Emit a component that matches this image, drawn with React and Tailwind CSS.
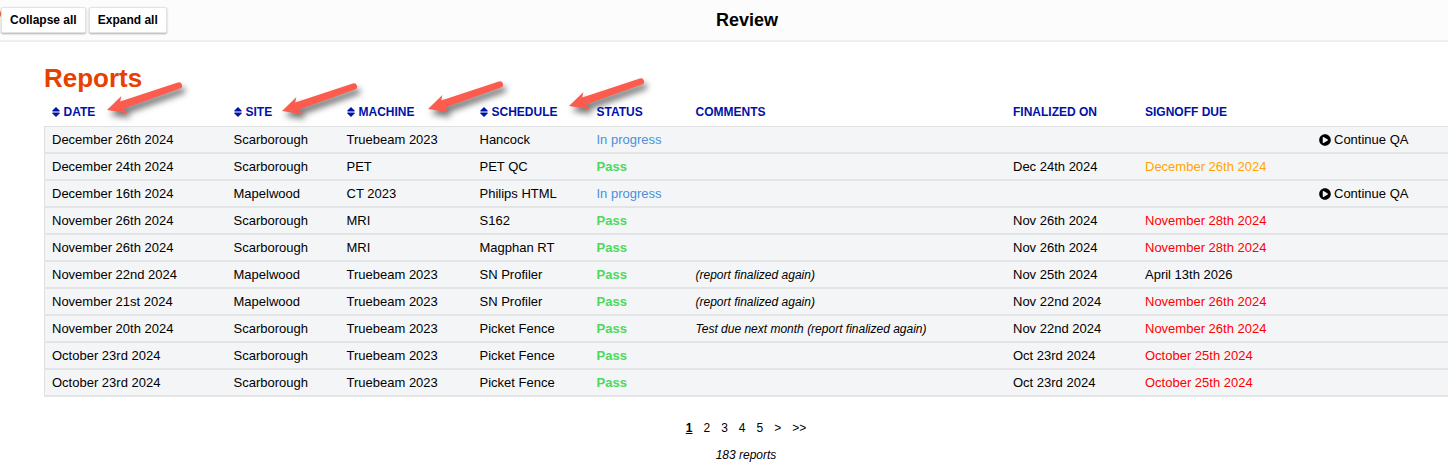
import React from 'react';
import { FaPlayCircle } from 'react-icons/fa';

const columns = [
  { label: 'Date', sortable: true, width: 'w-[182px]', arrow: 'left-[50px] -top-[25px]' },
  { label: 'Site', sortable: true, width: 'w-[113px]', arrow: 'left-[43px] -top-[24px]' },
  { label: 'Machine', sortable: true, width: 'w-[133px]', arrow: 'left-[76px] -top-[26px]' },
  { label: 'Schedule', sortable: true, width: 'w-[117px]', arrow: 'left-[84px] -top-[29px]' },
  { label: 'Status', width: 'w-[99px]' },
  { label: 'Comments', width: '' },
  { label: 'Finalized on', width: 'w-[132px]' },
  { label: 'Signoff due', width: 'w-[174px]' },
];

const reports = [
  { id: 1, date: 'December 26th 2024', site: 'Scarborough', machine: 'Truebeam 2023', schedule: 'Hancock', status: 'In progress' },
  { id: 2, date: 'December 24th 2024', site: 'Scarborough', machine: 'PET', schedule: 'PET QC', status: 'Pass', finalized: 'Dec 24th 2024', due: 'December 26th 2024', dueState: 'soon' },
  { id: 3, date: 'December 16th 2024', site: 'Mapelwood', machine: 'CT 2023', schedule: 'Philips HTML', status: 'In progress' },
  { id: 4, date: 'November 26th 2024', site: 'Scarborough', machine: 'MRI', schedule: 'S162', status: 'Pass', finalized: 'Nov 26th 2024', due: 'November 28th 2024', dueState: 'late' },
  { id: 5, date: 'November 26th 2024', site: 'Scarborough', machine: 'MRI', schedule: 'Magphan RT', status: 'Pass', finalized: 'Nov 26th 2024', due: 'November 28th 2024', dueState: 'late' },
  { id: 6, date: 'November 22nd 2024', site: 'Mapelwood', machine: 'Truebeam 2023', schedule: 'SN Profiler', status: 'Pass', comments: '(report finalized again)', finalized: 'Nov 25th 2024', due: 'April 13th 2026', dueState: 'ok' },
  { id: 7, date: 'November 21st 2024', site: 'Mapelwood', machine: 'Truebeam 2023', schedule: 'SN Profiler', status: 'Pass', comments: '(report finalized again)', finalized: 'Nov 22nd 2024', due: 'November 26th 2024', dueState: 'late' },
  { id: 8, date: 'November 20th 2024', site: 'Scarborough', machine: 'Truebeam 2023', schedule: 'Picket Fence', status: 'Pass', comments: 'Test due next month (report finalized again)', finalized: 'Nov 22nd 2024', due: 'November 26th 2024', dueState: 'late' },
  { id: 9, date: 'October 23rd 2024', site: 'Scarborough', machine: 'Truebeam 2023', schedule: 'Picket Fence', status: 'Pass', finalized: 'Oct 23rd 2024', due: 'October 25th 2024', dueState: 'late' },
  { id: 10, date: 'October 23rd 2024', site: 'Scarborough', machine: 'Truebeam 2023', schedule: 'Picket Fence', status: 'Pass', finalized: 'Oct 23rd 2024', due: 'October 25th 2024', dueState: 'late' },
];

const dueColors = { soon: 'text-[#ffa500]', late: 'text-[#ff0000]', ok: 'text-black' };

function SortIcon() {
  return (
    <svg viewBox="0 0 8 10" className="w-2 h-[10px]" fill="currentColor" aria-hidden="true">
      <path d="M4 0 L7.6 3.5 Q8 4.4 7.2 4.4 H0.8 Q0 4.4 0.4 3.5 Z" />
      <path d="M4 10 L7.6 6.5 Q8 5.6 7.2 5.6 H0.8 Q0 5.6 0.4 6.5 Z" />
    </svg>
  );
}

function Arrow({ className }) {
  return (
    <svg viewBox="0 0 84 44" className={`absolute w-[84px] h-[44px] pointer-events-none drop-shadow-[3px_5px_3px_rgba(0,0,0,0.55)] ${className}`} aria-hidden="true">
      <path d="M5 31 L19.4 17 L18.2 22.4 L75.8 3.4 A3.2 3.2 0 0 1 77.8 9.6 L22 29.6 L25.6 34.3 Z" fill="#fc5b4e" />
    </svg>
  );
}

function ToolbarButton({ children }) {
  return (
    <button type="button" className="h-[26px] px-2 rounded-[2px] border border-[#e3e3e3] bg-white text-xs font-semibold text-black shadow-[0_1px_2px_rgba(0,0,0,0.3)]">
      {children}
    </button>
  );
}

export default function App() {
  return (
    <div className="min-h-screen overflow-x-hidden bg-white text-black text-[13px] font-['Liberation_Sans',Arial,sans-serif]">
      {/* Top bar */}
      <header className="relative flex items-center h-[42px] bg-[#fcfcfc] border-b-2 border-[#efefed]">
        <span className="absolute -left-[11px] top-[8px] w-3 h-3 rounded-full bg-[#fb5a2c]"></span>
        <div className="relative flex gap-[3px] pl-px">
          <ToolbarButton>Collapse all</ToolbarButton>
          <ToolbarButton>Expand all</ToolbarButton>
        </div>
        <h1 className="absolute inset-x-0 pl-[46px] text-center text-lg leading-6 font-bold pointer-events-none">Review</h1>
      </header>

      <main className="pl-[44px] pt-[20px]">
        <h2 className="text-[26px] leading-8 font-bold text-[#e64100]">Reports</h2>

        <table className="w-full table-fixed border-collapse whitespace-nowrap">
          <thead>
            <tr className="h-8">
              {columns.map(c => (
                <th key={c.label} scope="col" className={`p-0 pl-[7px] pt-1 text-left align-middle text-xs font-bold text-[#0012a8] ${c.width}`}>
                  {c.sortable ? (
                    <div className="relative">
                      <button type="button" className="flex items-center gap-1 uppercase">
                        <SortIcon />
                        {c.label}
                      </button>
                      <Arrow className={c.arrow} />
                    </div>
                  ) : <span className="uppercase">{c.label}</span>}
                </th>
              ))}
              <td className="w-[136px]"></td>
            </tr>
          </thead>
          <tbody className="border border-r-0 border-[#dfe0e2] bg-[#f4f5f7]">
            {reports.map(r => (
              <tr key={r.id} className="h-[27px] border-b-2 border-[#e3e4e6]">
                <td className="p-0 pl-[7px] pt-px">{r.date}</td>
                <td className="p-0 pl-[7px] pt-px">{r.site}</td>
                <td className="p-0 pl-[7px] pt-px">{r.machine}</td>
                <td className="p-0 pl-[7px] pt-px">{r.schedule}</td>
                <td className={`p-0 pl-[7px] pt-px ${r.status === 'Pass' ? 'font-bold text-[#4cd95b]' : 'text-[#4a90d9]'}`}>{r.status}</td>
                <td className="p-0 pl-[7px] pt-px text-xs italic">{r.comments}</td>
                <td className="p-0 pl-[7px] pt-px">{r.finalized}</td>
                <td className={`p-0 pl-[7px] pt-px ${dueColors[r.dueState] || ''}`}>{r.due}</td>
                <td className="p-0 pl-[7px] pt-px">
                  {r.status === 'In progress' && (
                    <a href="#continue" className="flex items-center gap-[3px]">
                      <FaPlayCircle className="w-3 h-3" />Continue QA
                    </a>
                  )}
                </td>
              </tr>
            ))}
          </tbody>
        </table>

        {/* Pagination */}
        <nav className="flex justify-center gap-[11px] pt-[22px] text-xs leading-[18px]" aria-label="Pages">
          <a href="#1" className="font-bold underline">1</a>
          {['2', '3', '4', '5', '>', '>>'].map(p => <a key={p} href={`#${p}`}>{p}</a>)}
        </nav>
        <p className="pt-[9px] text-center text-xs leading-[18px] italic">183 reports</p>
      </main>
    </div>
  );
}
